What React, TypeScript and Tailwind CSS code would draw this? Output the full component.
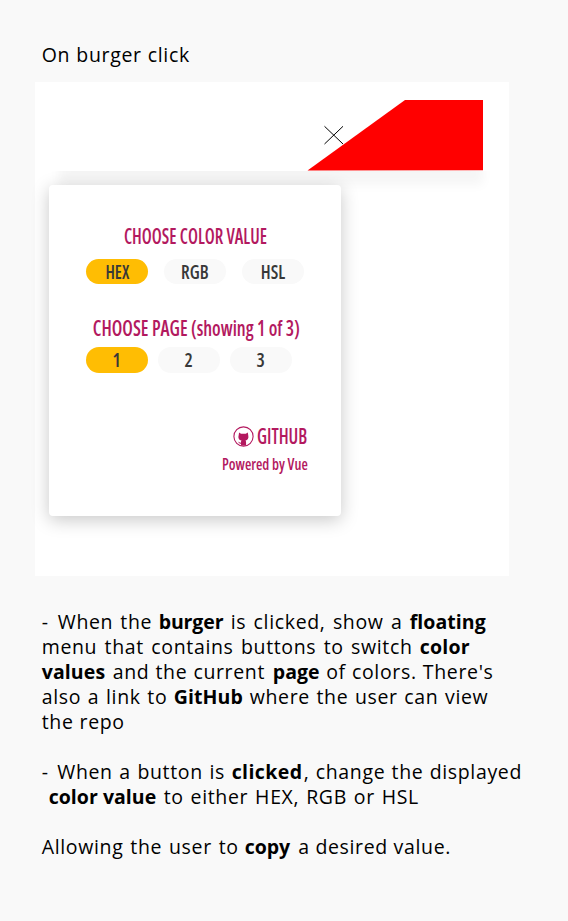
import type { ReactNode } from "react";

type SegProps = { className: string; bold?: boolean; children: ReactNode };

// One run of text in a line of notes; bold runs carry the keywords.
function Seg({ className, bold, children }: SegProps) {
  return (
    <span className={`shrink-0 whitespace-nowrap ${bold ? "font-bold" : "tracking-[0.65px]"} ${className}`}>
      {children}
    </span>
  );
}

function Line({ children }: { children?: ReactNode }) {
  return <div className="flex h-[25px]">{children}</div>;
}

function Narrow({ className, children }: { className: string; children: ReactNode }) {
  return (
    <span className={`shrink-0 whitespace-nowrap font-semibold [font-stretch:75%] ${className}`}>{children}</span>
  );
}

function Pill({ active, children }: { active?: boolean; children: ReactNode }) {
  return (
    <button
      className={`flex h-[25.5px] w-[62px] items-center justify-center rounded-full text-[20.5px] leading-[25px] text-[#383838] ${
        active ? "bg-[#ffbd03]" : "bg-[#f9f9f9]"
      }`}
    >
      {children}
    </button>
  );
}

function GithubMark() {
  return (
    <svg className="mt-[3px] size-[21px] shrink-0" viewBox="0 0 21 21">
      <circle cx="10.5" cy="10.5" r="9.6" fill="none" stroke="#b3195f" strokeWidth="1.1" />
      <path
        d="M6.1 6.6 L8 7.8 H12.8 L14.8 6.6 L15.2 9 C16 12.4 14.8 14 12.5 14.6 C13.1 15.2 13.1 16 13.1 19.6 H8 V17.8 C6.3 18.2 6 16.4 4.8 15.8 C6.3 15.5 6.6 17.1 8 16.6 C8 15.5 8.1 15 8.6 14.6 C6 14 4.8 12.4 5.7 9 Z"
        fill="#b3195f"
      />
    </svg>
  );
}

export default function App() {
  return (
    <main className="h-[921px] w-[568px] overflow-hidden bg-[#f9f9f9] pt-[42px] font-['Open_Sans',sans-serif] text-[19.5px] leading-[25px] text-black">
      <h1 className="flex h-[25px] pl-[41.7px]">
        <Seg className="[word-spacing:0.5px]">On burger click</Seg>
      </h1>

      <section className="mt-[15px] ml-[35px] h-[494px] w-[474px] bg-white pt-[18px]">
        <header className="ml-[24px] flex h-[71px] w-[424px] shadow-[0_14px_10px_rgba(0,0,0,0.04)]">
          <svg className="-ml-[16px] h-[71px] w-[456px] shrink-0 bg-white" viewBox="0 0 456 71">
            <path d="M264.5 70.4 L362 0 H440 V70.2 Z" fill="#ff0000" />
            <path d="M281.5 26.3 L300 44 M300 26.3 L281.5 44" stroke="#000" strokeWidth="1" fill="none" />
          </svg>
        </header>

        <div className="relative mt-[14px] ml-[14px] flex h-[330.5px] w-[292px] flex-col rounded-[4px] bg-white pt-[37px] text-[22px] leading-[26px] text-[#b3195f] shadow-[0_4px_18px_rgba(0,0,0,0.22)]">
          <h2 className="flex h-[26px] justify-center">
            <Narrow className="scale-x-[0.8]">CHOOSE COLOR VALUE</Narrow>
          </h2>
          <div className="mt-[10.5px] flex gap-[16px] pl-[37px]">
            <Pill active><Narrow className="scale-x-[0.83]">HEX</Narrow></Pill>
            <Pill><Narrow className="scale-x-[0.87]">RGB</Narrow></Pill>
            <Pill><Narrow className="scale-x-[0.87]">HSL</Narrow></Pill>
          </div>
          <h2 className="mt-[30px] flex h-[26px] justify-center pl-[2px]">
            <Narrow className="scale-x-[0.846]">CHOOSE PAGE (showing 1 of 3)</Narrow>
          </h2>
          <div className="mt-[7px] flex gap-[10px] pl-[37px]">
            <Pill active><Narrow className="scale-x-[0.9]">1</Narrow></Pill>
            <Pill><Narrow className="scale-x-[0.9]">2</Narrow></Pill>
            <Pill><Narrow className="scale-x-[0.9]">3</Narrow></Pill>
          </div>
          <a className="mt-[50px] flex h-[26px] pl-[183.5px] text-[21px]">
            <GithubMark />
            <Narrow className="ml-[3.5px] origin-left scale-x-[0.855]">GITHUB</Narrow>
          </a>
          <p className="mt-[5px] flex h-[20px] pl-[172.5px] text-[16.5px] leading-[20px]">
            <Narrow className="origin-left scale-x-[0.885]">Powered by Vue</Narrow>
          </p>
        </div>
      </section>

      <section className="mt-[33px] pl-[41.7px]">
        <Line>
          <Seg className="w-[117px] [word-spacing:1.4px]"><span className="mr-[2px]">-</span> When the</Seg>
          <Seg bold className="w-[72px] tracking-[-0.11px]">burger</Seg>
          <Seg className="w-[179px] [word-spacing:1.7px]">is clicked, show a</Seg>
          <Seg bold className="tracking-[0.06px]">floating</Seg>
        </Line>
        <Line>
          <Seg className="w-[378px] [word-spacing:1.7px]">menu that contains buttons to switch</Seg>
          <Seg bold className="tracking-[0.22px]">color</Seg>
        </Line>
        <Line>
          <Seg bold className="w-[71px] tracking-[0.12px]">values</Seg>
          <Seg className="w-[160px] [word-spacing:0.4px]">and the current</Seg>
          <Seg bold className="w-[53.5px] tracking-[0.1px]">page</Seg>
          <Seg className="[word-spacing:0.5px]">of colors. There's</Seg>
        </Line>
        <Line>
          <Seg className="w-[132px] [word-spacing:1px]">also a link to</Seg>
          <Seg bold className="w-[76px] tracking-[0.1px]">GitHub</Seg>
          <Seg className="[word-spacing:0.9px]">where the user can view</Seg>
        </Line>
        <Line>
          <Seg className="[word-spacing:0.3px]">the repo</Seg>
        </Line>
        <Line />
        <Line>
          <Seg className="w-[190px] [word-spacing:0.9px]"><span className="mr-[2px]">-</span> When a button is</Seg>
          <Seg bold className="w-[72px] tracking-[0.4px]">clicked</Seg>
          <Seg className="[word-spacing:0.6px]">, change the displayed</Seg>
        </Line>
        <Line>
          <Seg bold className="ml-[7px] w-[115px] tracking-[0.03px]">color value</Seg>
          <Seg className="[word-spacing:1.2px]">to either HEX, RGB or HSL</Seg>
        </Line>
        <Line />
        <Line>
          <Seg className="w-[203px] [word-spacing:1.2px]">Allowing the user to</Seg>
          <Seg bold className="w-[53.5px] tracking-[-0.05px]">copy</Seg>
          <Seg className="">a desired value.</Seg>
        </Line>
      </section>
    </main>
  );
}
